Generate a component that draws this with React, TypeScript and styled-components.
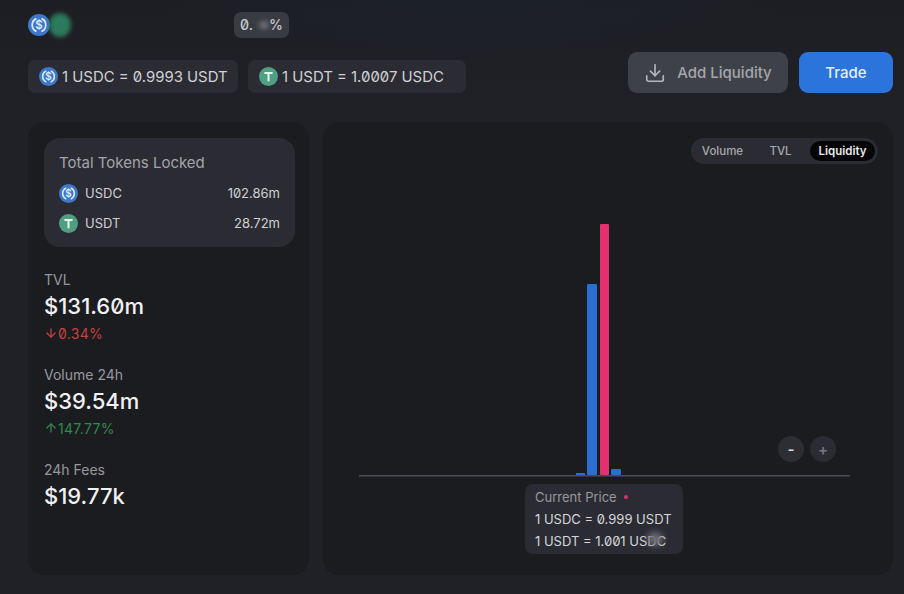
import React from 'react';
import styled, {createGlobalStyle} from 'styled-components';
import {Download, ArrowDown, ArrowUp} from 'lucide-react';

const GlobalStyle = createGlobalStyle`
  html, body {
    margin: 0;
    padding: 0;
    background: #202126;
  }
  body {
    font-family: Inter, "Noto Sans", "Liberation Sans", sans-serif;
    font-feature-settings: 'zero';
    color: #d8d9dc;
  }
  * {
    box-sizing: border-box;
  }
`;

const Page = styled.div`
  width: 904px;
  height: 594px;
  padding: 12px 11px 19px 28px;
  overflow: hidden;
  display: flex;
  flex-direction: column;
  background: radial-gradient(ellipse 340px 70px at 470px 0, #1c2029 0%, rgba(28, 32, 41, 0) 100%),
    linear-gradient(180deg, #1d1e23 0%, #202126 110px);
`;

const PairRow = styled.div`
  height: 25px;
  display: flex;
  align-items: center;
`;

const PairIcons = styled.div`
  width: 206px;
  display: flex;
  align-items: center;
`;

const BlurredToken = styled.div`
  width: 22px;
  height: 24px;
  margin-left: -1px;
  border-radius: 50%;
  background: #2c7a5c;
  filter: blur(2px);
`;

const FeeBadge = styled.div`
  width: 55px;
  height: 26px;
  border-radius: 7px;
  background: #393b43;
  color: #c9cace;
  font-size: 14px;
  font-weight: 500;
  display: flex;
  align-items: center;
  justify-content: center;
`;

const Smudge = styled.span`
  display: inline-block;
  width: 16px;
  height: 8px;
  text-align: right;
  filter: blur(2.5px);
  background: radial-gradient(circle at 70% 50%, #8b8c92 0%, rgba(139, 140, 146, 0) 60%);
`;

const ActionRow = styled.div`
  height: 41px;
  margin-top: 15px;
  display: flex;
  align-items: flex-end;
`;

const RateChips = styled.div`
  display: flex;
  gap: 10px;
  flex: 1;
`;

const RateChip = styled.div<{$width: number}>`
  width: ${p => p.$width}px;
  height: 33px;
  padding-left: 11px;
  border-radius: 7px;
  background: #2b2c33;
  color: #d0d1d5;
  font-size: 14.9px;
  display: flex;
  align-items: center;
  gap: 4px;
  white-space: nowrap;
`;

const Buttons = styled.div`
  display: flex;
  gap: 11px;
`;

const Button = styled.button<{$primary?: boolean}>`
  height: 41px;
  width: ${p => (p.$primary ? 94 : 160)}px;
  border: 0;
  border-radius: 9px;
  background: ${p => (p.$primary ? '#2a74dc' : '#3f4149')};
  color: ${p => (p.$primary ? '#e6eefb' : '#a4a6ac')};
  font-family: inherit;
  font-size: 15px;
  font-weight: 500;
  display: flex;
  align-items: center;
  justify-content: center;
  gap: 11px;
`;

const Panels = styled.div`
  flex: 1;
  margin-top: 29px;
  display: flex;
  gap: 14px;
  min-height: 0;
`;

const SidePanel = styled.div`
  width: 281px;
  padding: 16px 14px 0 16px;
  border-radius: 16px;
  background: #1b1c20;
`;

const LockedCard = styled.div`
  height: 109px;
  padding: 16px 15px 0 15px;
  border-radius: 16px;
  background: #2b2c33;
`;

const CardTitle = styled.div`
  color: #a3a5ab;
  font-size: 15px;
  line-height: 18px;
  margin-bottom: 6px;
`;

const TokenRow = styled.div`
  height: 30px;
  display: flex;
  align-items: center;
  gap: 7px;
  color: #cfd0d4;
  font-size: 13px;
`;

const TokenAmount = styled.span`
  margin-left: auto;
`;

const Stats = styled.div`
  margin-top: 22px;
  display: flex;
  flex-direction: column;
  gap: 21px;
`;

const Stat = styled.div`
  display: flex;
  flex-direction: column;
`;

const StatLabel = styled.div`
  color: #96989e;
  font-size: 14px;
  line-height: 21px;
`;

const StatValue = styled.div`
  color: #f1f1f3;
  font-size: 22px;
  font-weight: 500;
  line-height: 33px;
`;

const StatDelta = styled.div<{$up?: boolean}>`
  height: 20px;
  color: ${p => (p.$up ? '#2f8a4e' : '#c9403f')};
  font-size: 14px;
  letter-spacing: 0.3px;
  display: flex;
  align-items: center;
`;

const ChartPanel = styled.div`
  position: relative;
  flex: 1;
  padding: 16px 15px 0 0;
  border-radius: 16px;
  background: #1b1c20;
  display: flex;
  justify-content: flex-end;
  align-items: flex-start;
`;

const Segmented = styled.div`
  height: 26px;
  padding: 3px;
  border-radius: 13px;
  background: #2b2c33;
  display: flex;
  align-items: center;
`;

const Segment = styled.div<{$active?: boolean; $width: number}>`
  width: ${p => p.$width}px;
  height: 20px;
  border-radius: 10px;
  background: ${p => (p.$active ? '#050505' : 'transparent')};
  color: ${p => (p.$active ? '#e8e8ea' : '#a6a8ae')};
  font-size: 11.5px;
  font-weight: ${p => (p.$active ? 600 : 500)};
  display: flex;
  align-items: center;
  justify-content: center;
`;

const ChartCanvas = styled.svg`
  position: absolute;
  left: 0;
  top: 0;
`;

const ZoomControls = styled.div`
  position: absolute;
  left: 455px;
  top: 314px;
  display: flex;
  gap: 6px;
`;

const ZoomButton = styled.div<{$dim?: boolean}>`
  width: 26px;
  height: 26px;
  border-radius: 50%;
  background: ${p => (p.$dim ? '#2a2b33' : '#2d2e33')};
  color: ${p => (p.$dim ? '#77787f' : '#d5d6d9')};
  font-size: 15px;
  font-weight: 600;
  display: flex;
  align-items: center;
  justify-content: center;
`;

const PriceTooltip = styled.div`
  position: absolute;
  left: 202px;
  top: 362px;
  width: 158px;
  height: 70px;
  padding: 2px 10px;
  border-radius: 8px;
  background: #2b2c33;
  color: #d6d7da;
  font-size: 13px;
  line-height: 22px;
  white-space: nowrap;
`;

const TooltipTitle = styled.div`
  color: #96989e;
  display: flex;
  align-items: center;
  gap: 7px;
`;

const PriceDot = styled.span`
  width: 4px;
  height: 4px;
  border-radius: 50%;
  background: #e5306f;
`;

const TooltipSmudge = styled.span`
  position: absolute;
  left: 122px;
  top: 48px;
  width: 16px;
  height: 14px;
  border-radius: 50%;
  background: #6d6e75;
  filter: blur(3px);
`;

function UsdcIcon({size}: {size: number}) {
  return (
    <svg width={size} height={size} viewBox="0 0 24 24">
      <circle cx="12" cy="12" r="12" fill="#3f78c9" />
      <path
        d="M8.6 5.3a7.6 7.6 0 0 0 0 13.4M15.4 5.3a7.6 7.6 0 0 1 0 13.4"
        fill="none"
        stroke="#dcebfb"
        strokeWidth="1.9"
        strokeLinecap="round"
      />
      <text
        x="12"
        y="16.4"
        textAnchor="middle"
        fontSize="12.5"
        fontWeight="600"
        fontFamily="Inter, sans-serif"
        fill="#dcebfb"
      >
        $
      </text>
    </svg>
  );
}

function UsdtIcon({size}: {size: number}) {
  return (
    <svg width={size} height={size} viewBox="0 0 24 24">
      <circle cx="12" cy="12" r="12" fill="#4f9f83" />
      <path d="M6.8 6.3h10.4v2.6h-3.9v9.2h-2.6V8.9H6.8z" fill="#e6f3ee" />
    </svg>
  );
}

// current price chart, drawn in panel coordinates
function LiquidityChart() {
  return (
    <ChartCanvas width={570} height={453}>
      <rect x="36" y="353" width="491" height="1.5" fill="#4a4c52" />
      <rect x="253" y="351" width="9" height="2" fill="#2a6fd0" />
      <rect x="264" y="162" width="10" height="191" rx="1" fill="#2a6fd0" />
      <rect x="277" y="102" width="9" height="251" rx="1" fill="#e5306f" />
      <rect x="288" y="347" width="10" height="6" rx="1" fill="#2a6fd0" />
    </ChartCanvas>
  );
}

export default function App() {
  return (
    <Page>
      <GlobalStyle />
      <PairRow>
        <PairIcons>
          <UsdcIcon size={22} />
          <BlurredToken />
        </PairIcons>
        <FeeBadge>
          0.
          <Smudge />
          %
        </FeeBadge>
      </PairRow>

      <ActionRow>
        <RateChips>
          <RateChip $width={210}>
            <UsdcIcon size={19} />1 USDC = 0.9993 USDT
          </RateChip>
          <RateChip $width={218}>
            <UsdtIcon size={19} />1 USDT = 1.0007 USDC
          </RateChip>
        </RateChips>
        <Buttons>
          <Button>
            <Download size={22} strokeWidth={1.8} color="#b4b6bb" />
            Add Liquidity
          </Button>
          <Button $primary>Trade</Button>
        </Buttons>
      </ActionRow>

      <Panels>
        <SidePanel>
          <LockedCard>
            <CardTitle>Total Tokens Locked</CardTitle>
            <TokenRow>
              <UsdcIcon size={19} />
              USDC
              <TokenAmount>102.86m</TokenAmount>
            </TokenRow>
            <TokenRow>
              <UsdtIcon size={19} />
              USDT
              <TokenAmount>28.72m</TokenAmount>
            </TokenRow>
          </LockedCard>

          <Stats>
            <Stat>
              <StatLabel>TVL</StatLabel>
              <StatValue>$131.60m</StatValue>
              <StatDelta>
                <ArrowDown size={14} strokeWidth={2.2} />
                0.34%
              </StatDelta>
            </Stat>
            <Stat>
              <StatLabel>Volume 24h</StatLabel>
              <StatValue>$39.54m</StatValue>
              <StatDelta $up>
                <ArrowUp size={14} strokeWidth={2.2} />
                147.77%
              </StatDelta>
            </Stat>
            <Stat>
              <StatLabel>24h Fees</StatLabel>
              <StatValue>$19.77k</StatValue>
            </Stat>
          </Stats>
        </SidePanel>

        <ChartPanel>
          <LiquidityChart />
          <Segmented>
            <Segment $width={57}>Volume</Segment>
            <Segment $width={59}>TVL</Segment>
            <Segment $active $width={65}>
              Liquidity
            </Segment>
          </Segmented>
          <ZoomControls>
            <ZoomButton>-</ZoomButton>
            <ZoomButton $dim>+</ZoomButton>
          </ZoomControls>
          <PriceTooltip>
            <TooltipTitle>
              Current Price
              <PriceDot />
            </TooltipTitle>
            <div>1 USDC = 0.999 USDT</div>
            <div>1 USDT = 1.001 USDC</div>
            <TooltipSmudge />
          </PriceTooltip>
        </ChartPanel>
      </Panels>
    </Page>
  );
}
